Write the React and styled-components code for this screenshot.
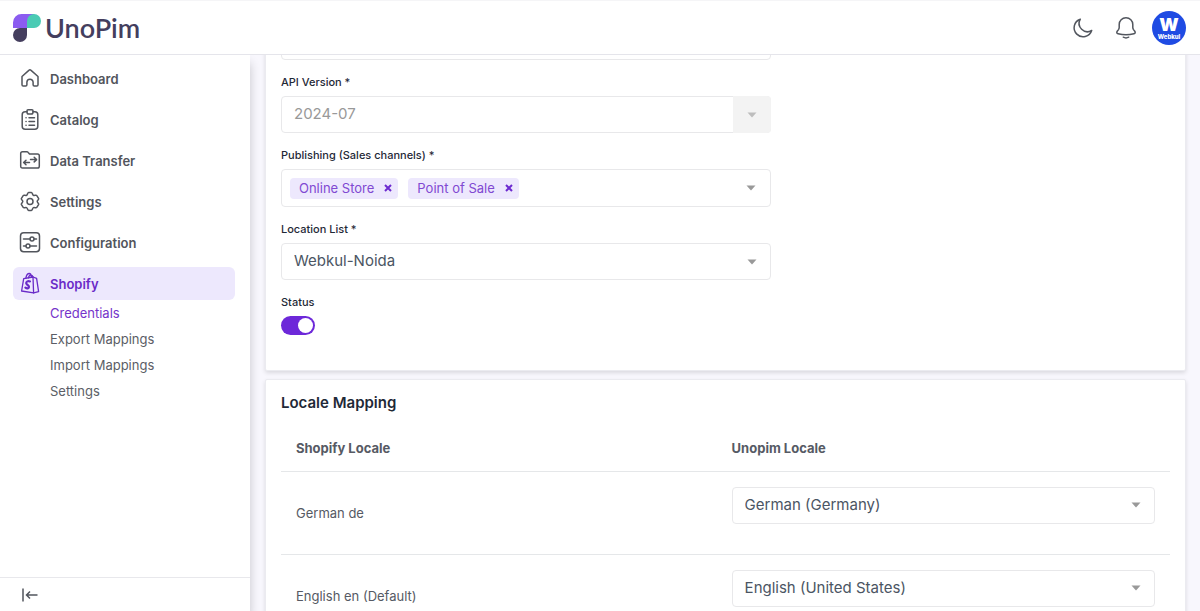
import React, { useLayoutEffect, useRef } from "react";
import styled, { createGlobalStyle } from "styled-components";

const GlobalStyle = createGlobalStyle`
  * {
    box-sizing: border-box;
  }

  body {
    margin: 0;
    background-color: #f8f7fd;
    color: #1f2937;
    font-family: Inter, "Liberation Sans", sans-serif;
    font-size: 13px;
  }

  button, input, select {
    font: inherit;
  }
`;

const Page = styled.div`
  display: flex;
  flex-direction: column;
  height: 100vh;
  overflow: hidden;
`;

const Header = styled.header`
  display: flex;
  flex-shrink: 0;
  align-items: center;
  justify-content: space-between;
  height: 55px;
  padding: 0 14px 0 13px;
  background-color: #ffffff;
  border-top: 1px solid #f5f5f7;
  border-bottom: 1px solid #e5e5eb;
  z-index: 2;
`;

const Brand = styled.a`
  display: flex;
  align-items: center;
  gap: 4px;
  color: #443e5e;
  font-family: Lato, sans-serif;
  font-size: 27px;
  font-weight: 600;
  line-height: 32px;
  text-decoration: none;
`;

const HeaderActions = styled.div`
  display: flex;
  align-items: center;
  gap: 12px;
`;

const IconGroup = styled.div`
  display: flex;
  gap: 15px;
`;

const IconButton = styled.button`
  display: flex;
  align-items: center;
  justify-content: center;
  width: 28px;
  height: 28px;
  padding: 0;
  color: #52565e;
  background: none;
  border: 0;
  cursor: pointer;
`;

const Avatar = styled.button`
  display: flex;
  flex-direction: column;
  align-items: center;
  justify-content: center;
  width: 34px;
  height: 34px;
  padding: 0;
  color: #ffffff;
  background-color: #1f4be3;
  border: 0;
  border-radius: 50%;
  cursor: pointer;
`;

const AvatarMark = styled.span`
  font-size: 18px;
  font-weight: 900;
  line-height: 18px;
`;

const AvatarName = styled.span`
  font-size: 6px;
  font-weight: 800;
  line-height: 6px;
`;

const Body = styled.div`
  display: flex;
  flex: 1;
  min-height: 0;
`;

const Sidebar = styled.aside`
  display: flex;
  flex-direction: column;
  flex-shrink: 0;
  justify-content: space-between;
  width: 250px;
  background-color: #ffffff;
  box-shadow: 0 8px 10px rgba(0, 0, 0, 0.2);
  z-index: 1;
`;

const Menu = styled.nav`
  padding: 7px 15px 0 13px;
`;

const MenuLink = styled.a`
  display: flex;
  align-items: center;
  gap: 10px;
  height: 33px;
  padding-left: 7px;
  color: ${(props) => (props.$active ? "#6a2bc8" : "#52555c")};
  background-color: ${(props) => (props.$active ? "#ede8fd" : "transparent")};
  border-radius: 6px;
  font-weight: 600;
  text-decoration: none;

  & + & {
    margin-top: 8px;
  }

  svg {
    width: 20px;
    height: 22px;
    flex-shrink: 0;
    overflow: visible;
  }
`;

const SubMenu = styled.div`
  display: flex;
  flex-direction: column;
  padding-left: 37px;
`;

const SubLink = styled.a`
  color: ${(props) => (props.$active ? "#7534ca" : "#5b5e66")};
  line-height: 26px;
  text-decoration: none;
`;

const SidebarFooter = styled.div`
  display: flex;
  align-items: center;
  height: 34px;
  padding-left: 16px;
  border-top: 1px solid #e8e8ec;
`;

const Main = styled.main`
  flex: 1;
  min-width: 0;
  padding: 15px 14px 40px 15px;
  overflow-y: auto;
  scrollbar-width: none;
`;

const Card = styled.section`
  margin-bottom: 8px;
  padding: 15px;
  background-color: #ffffff;
  border: 1px solid #ebebf0;
  border-radius: 2px;
  box-shadow: 0 2px 4px rgba(0, 0, 0, 0.12);
`;

const Fields = styled.div`
  display: flex;
  flex-direction: column;
  gap: 14px;
  max-width: 490px;
  padding-bottom: 20px;
`;

const Field = styled.div`
  display: flex;
  flex-direction: column;
  align-items: stretch;
`;

const Label = styled.label`
  margin-bottom: 5px;
  font-size: 11px;
  font-weight: 500;
  line-height: 17px;
`;

const SelectWrap = styled.div`
  display: grid;
  align-items: center;
`;

const SelectBox = styled.select`
  grid-area: 1 / 1;
  width: 100%;
  height: 37px;
  padding: 0 40px 2px 12px;
  appearance: none;
  color: #4b5563;
  background-color: #ffffff;
  border: 1px solid #e8e8ea;
  border-radius: 4px;
  font-size: 15px;
  opacity: 1;

  &:disabled {
    color: #999999;
  }
`;

const CaretBox = styled.span`
  grid-area: 1 / 1;
  justify-self: end;
  display: flex;
  align-items: center;
  justify-content: center;
  width: 38px;
  height: 37px;
  color: ${(props) => (props.$disabled ? "#bdbdbd" : "#999999")};
  background-color: ${(props) => (props.$disabled ? "#f3f3f3" : "transparent")};
  border-radius: 0 4px 4px 0;
  pointer-events: none;
`;

const TagBox = styled.div`
  display: flex;
  align-items: center;
  justify-content: space-between;
  height: 38px;
  padding-left: 8px;
  border: 1px solid #e8e8ea;
  border-radius: 4px;
`;

const Tags = styled.div`
  display: flex;
  gap: 10px;
`;

const Tag = styled.span`
  display: flex;
  align-items: center;
  gap: 10px;
  height: 21px;
  padding: 0 6px 0 9px;
  color: #8049d2;
  background-color: #ede8fd;
  border-radius: 4px;
`;

const RemoveButton = styled.button`
  display: flex;
  padding: 0;
  color: #6d2bd0;
  background: none;
  border: 0;
  cursor: pointer;
`;

const Toggle = styled.input`
  display: flex;
  align-items: center;
  width: 34px;
  height: 19px;
  margin: 0;
  padding: 0 2px;
  appearance: none;
  background-color: #d1d5db;
  border-radius: 10px;
  cursor: pointer;

  &::before {
    content: "";
    width: 15px;
    height: 15px;
    background-color: #ffffff;
    border-radius: 50%;
  }

  &:checked {
    justify-content: flex-end;
    background-color: #6d28d9;
  }
`;

const Title = styled.h2`
  margin: 0;
  font-size: 15px;
  font-weight: 600;
  line-height: 16px;
`;

const Table = styled.table`
  width: 100%;
  margin-top: 14px;
  border-collapse: collapse;
  table-layout: fixed;
  color: #565a64;

  tr {
    border-bottom: 1px solid #e5e7e9;
  }

  th {
    height: 46px;
    padding: 0 15px;
    font-weight: 700;
    text-align: left;
  }

  td {
    padding: 15px 15px 30px;
  }

  td:first-child {
    padding: 0 15px;
  }

  th:first-child {
    width: 49%;
  }
`;

const HomeIcon = () => (
  <svg viewBox="0 0 20 22" fill="none" stroke="currentColor" strokeWidth="1.5" strokeLinejoin="round">
    <path d="M2 8.5 9.1 2.1a1.2 1.2 0 0 1 1.7 0L18 8.5v8.2c0 .7-.5 1.3-1.2 1.3h-2.5c-.7 0-1.2-.5-1.2-1.2v-2.5a3.1 3.1 0 0 0-6.2 0v2.5c0 .7-.5 1.2-1.2 1.2H3.2C2.5 18 2 17.4 2 16.7z" />
  </svg>
);

const CatalogIcon = () => (
  <svg viewBox="0 0 20 22" fill="none" stroke="currentColor" strokeWidth="1.5" strokeLinecap="round" strokeLinejoin="round">
    <path d="M7 2.8H5.200a3 3 0 0 0-3 3v11.400a3 3 0 0 0 3 3h9.600a3 3 0 0 0 3-3V5.800a3 3 0 0 0-3-3H13" />
    <path d="M7 1.8c0-.6.4-1 1-1h4c.6 0 1 .4 1 1v1.400c0 1-.8 1.800-1.800 1.800H8.800C7.800 5 7 4.200 7 3.200z" />
    <path d="M9 8.800h5.500M9 12.500h5.500M9 16.200h5.500M6 8.800h.1M6 12.500h.1M6 16.200h.1" />
  </svg>
);

const TransferIcon = () => (
  <svg viewBox="0 0 20 22" fill="none" stroke="currentColor" strokeWidth="1.5" strokeLinecap="round" strokeLinejoin="round">
    <path d="M.7 3.500c0-1.200.6-1.800 1.800-1.800h4.300c.6 0 1 .2 1.400.7l1.300 1.500h8c1.200 0 1.800.6 1.800 1.800v10.500c0 1.200-.6 1.800-1.800 1.800h-15C1.300 18 .7 17.400.7 16.200z" />
    <path d="M10.500 9.600h5.800M14.200 7.300l2.400 2.300-2.400 2.300M9.500 12.500H3.900M6 10.200l-2.400 2.300L6 14.800" />
  </svg>
);

const GearIcon = () => (
  <svg viewBox="0 0 20 22" fill="none" stroke="currentColor" strokeWidth="1.5" strokeLinejoin="round">
    <circle cx="10" cy="10.5" r="3" />
    <path d="M8.600 1.500h2.800c.9 0 1.100 2.300 2 2.800s2.900-.5 3.400.3l1.900 3c.4.800-1.500 1.900-1.500 2.900s1.900 2.100 1.500 2.900l-1.900 3c-.5.800-2.500-.2-3.400.3s-1.100 2.800-2 2.800H8.600c-.9 0-1.100-2.300-2-2.800s-2.900.5-3.400-.3l-1.900-3c-.4-.8 1.500-1.900 1.500-2.900S.9 8.400 1.300 7.600l1.900-3c.5-.8 2.500.2 3.400-.3s1.100-2.800 2-2.800z" />
  </svg>
);

const ConfigIcon = () => (
  <svg viewBox="0 0 20 22" fill="none" stroke="currentColor" strokeWidth="1.5" strokeLinecap="round">
    <rect x=".5" y=".8" width="19" height="19" rx="3.2" />
    <circle cx="12" cy="7" r="2" />
    <circle cx="8" cy="14" r="2" />
    <path d="M3.500 7H10M14.200 7h2.300M3.500 14h2.300M10.200 14h6.300" />
  </svg>
);

const ShopifyIcon = () => (
  <svg viewBox="0 0 20 22" fill="none" stroke="currentColor" strokeWidth="1.3" strokeLinecap="round" strokeLinejoin="round">
    <path d="M3.700 5.700 13 4l.6 15.900L1.600 18z" />
    <path d="m13 4 3.600 1.300 2 13.400-5 1.200" />
    <path d="M5.800 5.300C6.300 2.500 7.800.5 9.300.5c1.300 0 2 1.600 2.200 3.700M8.400 4.900C8.800 2.700 10.200 1.500 11.400 2c.8.3 1.300 1.200 1.600 2" />
    <path d="M10 8.400c-1.900-.9-3.900.2-3.800 1.900.1 1.600 2.900 1.900 2.800 3.600-.1 1.500-1.900 2-3.600.8" strokeWidth="2.2" />
  </svg>
);

const MoonIcon = () => (
  <svg width="22" height="22" viewBox="0 0 22 22" fill="none" stroke="currentColor" strokeWidth="1.5" strokeLinejoin="round">
    <path d="M8.300 2.200A9 9 0 1 0 19.700 13.500 8.300 8.300 0 0 1 8.300 2.200z" />
  </svg>
);

const BellIcon = () => (
  <svg width="22" height="24" viewBox="0 0 22 24" fill="none" stroke="currentColor" strokeWidth="1.5" strokeLinecap="round" strokeLinejoin="round">
    <path d="M11 1.800c-3.900 0-6.800 2.900-6.800 6.600v3.200c0 .8-.2 1.300-.7 2L2.200 15.300c-.9 1.300-.3 2.100.9 2.400 5 1.400 10.800 1.400 15.800 0 1.200-.3 1.800-1.100.9-2.400l-1.300-1.700c-.5-.7-.7-1.200-.7-2V8.400c0-3.700-2.900-6.600-6.800-6.600z" />
    <path d="M8.300 21.200c1.700.9 3.700.9 5.400 0" />
  </svg>
);

const LogoMark = () => (
  <svg width="28" height="28" viewBox="0 0 28 28">
    <path d="M8.500 0H21v7a7 7 0 0 1-7 7H0V8.500A8.500 8.500 0 0 1 8.500 0z" fill="#8b5cf0" />
    <path d="M14 14V7a7 7 0 1 1 7 7z" fill="#4acbb4" />
    <path d="M7 14h7v7a7 7 0 0 1-14 0 7 7 0 0 1 7-7z" fill="#443e5e" />
  </svg>
);

const Caret = () => (
  <svg width="10" height="6" viewBox="0 0 10 6" fill="currentColor">
    <path d="M.5.500h9L5 5.500z" />
  </svg>
);

const CrossIcon = () => (
  <svg width="8" height="8" viewBox="0 0 8 8" stroke="currentColor" strokeWidth="2">
    <path d="m1 1 6 6M7 1 1 7" />
  </svg>
);

const CollapseIcon = () => (
  <svg width="16" height="14" viewBox="0 0 16 14" fill="none" stroke="currentColor" strokeWidth="1.5">
    <path d="M1 .5v13M15.500 7H4.500M8 3.500 4.500 7 8 10.500" />
  </svg>
);

const menuItems = [
  { label: "Dashboard", Icon: HomeIcon },
  { label: "Catalog", Icon: CatalogIcon },
  { label: "Data Transfer", Icon: TransferIcon },
  { label: "Settings", Icon: GearIcon },
  { label: "Configuration", Icon: ConfigIcon },
  { label: "Shopify", Icon: ShopifyIcon, active: true },
];

const subItems = ["Credentials", "Export Mappings", "Import Mappings", "Settings"];

const channels = ["Online Store", "Point of Sale"];

const locales = [
  { id: "de", name: "German de", value: "German (Germany)" },
  { id: "en", name: "English en (Default)", value: "English (United States)" },
];

const Select = ({ value, disabled, ...rest }) => (
  <SelectWrap>
    <SelectBox disabled={disabled} {...rest}>
      {value && <option>{value}</option>}
    </SelectBox>
    <CaretBox $disabled={disabled}>
      <Caret />
    </CaretBox>
  </SelectWrap>
);

const App = () => {
  const mainRef = useRef(null);

  // open the form at the API version field
  useLayoutEffect(() => {
    mainRef.current.scrollTop = 63;
  }, []);

  return (
    <Page>
      <GlobalStyle />
      <Header>
        <Brand href="#">
          <LogoMark />
          <span>UnoPim</span>
        </Brand>
        <HeaderActions>
          <IconGroup>
            <IconButton aria-label="Dark mode">
              <MoonIcon />
            </IconButton>
            <IconButton aria-label="Notifications">
              <BellIcon />
            </IconButton>
          </IconGroup>
          <Avatar>
            <AvatarMark>W</AvatarMark>
            <AvatarName>Webkul</AvatarName>
          </Avatar>
        </HeaderActions>
      </Header>
      <Body>
        <Sidebar>
          <Menu>
            {menuItems.map(({ label, Icon, active }) => (
              <MenuLink key={label} href="#" $active={active}>
                <Icon />
                {label}
              </MenuLink>
            ))}
            <SubMenu>
              {subItems.map((label, i) => (
                <SubLink key={label} href="#" $active={i === 0}>
                  {label}
                </SubLink>
              ))}
            </SubMenu>
          </Menu>
          <SidebarFooter>
            <IconButton aria-label="Collapse menu">
              <CollapseIcon />
            </IconButton>
          </SidebarFooter>
        </Sidebar>
        <Main ref={mainRef}>
          <Card>
            <Fields>
              <Select aria-label="Store" />
              <Field>
                <Label htmlFor="api">API Version *</Label>
                <Select id="api" value="2024-07" disabled />
              </Field>
              <Field>
                <Label as="span" id="channels">Publishing (Sales channels) *</Label>
                <TagBox role="group" aria-labelledby="channels">
                  <Tags>
                    {channels.map((name) => (
                      <Tag key={name}>
                        {name}
                        <RemoveButton aria-label={`Remove ${name}`}>
                          <CrossIcon />
                        </RemoveButton>
                      </Tag>
                    ))}
                  </Tags>
                  <CaretBox>
                    <Caret />
                  </CaretBox>
                </TagBox>
              </Field>
              <Field>
                <Label htmlFor="location">Location List *</Label>
                <Select id="location" value="Webkul-Noida" />
              </Field>
              <Field>
                <Label htmlFor="status">Status</Label>
                <Toggle id="status" type="checkbox" defaultChecked />
              </Field>
            </Fields>
          </Card>
          <Card>
            <Title>Locale Mapping</Title>
            <Table>
              <thead>
                <tr>
                  <th>Shopify Locale</th>
                  <th>Unopim Locale</th>
                </tr>
              </thead>
              <tbody>
                {locales.map(({ id, name, value }) => (
                  <tr key={id}>
                    <td>
                      <label htmlFor={id}>{name}</label>
                    </td>
                    <td>
                      <Select id={id} value={value} />
                    </td>
                  </tr>
                ))}
              </tbody>
            </Table>
          </Card>
        </Main>
      </Body>
    </Page>
  );
};

export default App;
